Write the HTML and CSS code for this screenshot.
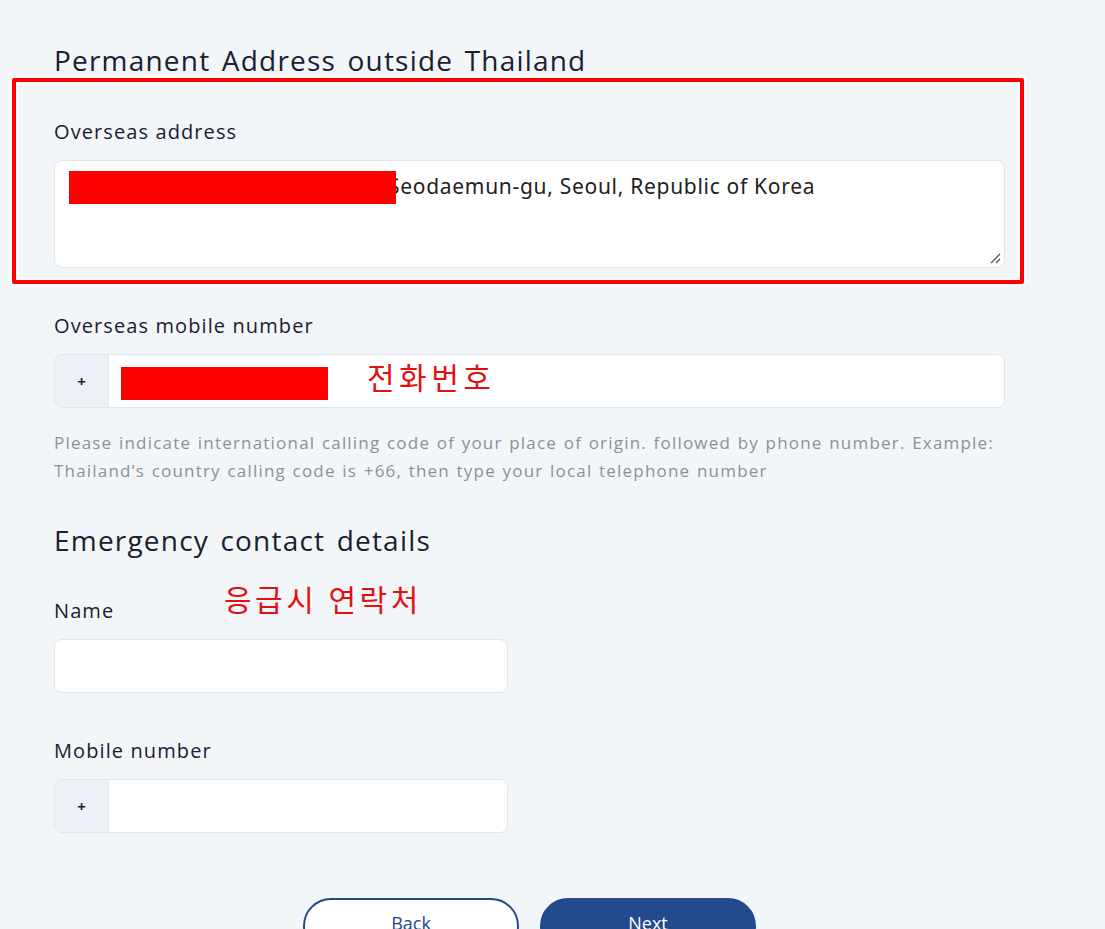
FILE: index.html
```html
<!DOCTYPE html>
<html lang="en">
<head>
    <meta charset="UTF-8" />
    <title>Permanent Address outside Thailand</title>
    <link rel="stylesheet" href="styles.css">
</head>
<body>
    <main class="form-page">
        <section class="section section-address">
            <h2 class="section-title">Permanent Address outside Thailand</h2>
            <div class="field">
                <label class="field-label">Overseas address</label>
                <div class="textarea">
                    <span class="redact redact-address"></span>
                    <span class="textarea-value">Seodaemun-gu, Seoul, Republic of Korea</span>
                    <svg class="resize-grip" width="12" height="12" viewBox="0 0 12 12">
                        <path d="M2 11 L11 2 M7 11 L11 7" stroke="#555" stroke-width="1.3" fill="none"/>
                    </svg>
                </div>
            </div>
            <div class="annotation-box"></div>
        </section>

        <div class="field">
            <label class="field-label">Overseas mobile number</label>
            <div class="input-group">
                <span class="input-prefix">+</span>
                <div class="input input-wide">
                    <span class="redact redact-phone"></span>
                    <span class="note note-phone">전화번호</span>
                </div>
            </div>
            <p class="hint">Please indicate international calling code of your place of origin. followed by phone number. Example: Thailand’s country calling code is +66, then type your local telephone number</p>
        </div>

        <section class="section section-emergency">
            <h2 class="section-title">Emergency contact details</h2>
            <span class="note note-emergency">응급시 연락처</span>
            <div class="field">
                <label class="field-label">Name</label>
                <div class="input input-half"></div>
            </div>
            <div class="field field-mobile">
                <label class="field-label">Mobile number</label>
                <div class="input-group input-half">
                    <span class="input-prefix">+</span>
                    <div class="input"></div>
                </div>
            </div>
        </section>

        <div class="actions">
            <button class="btn btn-outline" type="button">Back</button>
            <button class="btn btn-primary" type="button">Next</button>
        </div>
    </main>
</body>
</html>
```

FILE: styles.css
```css
* {
    box-sizing: border-box;
}
html, body {
    margin: 0;
    height: 100%;
    overflow: hidden;
}
body {
    background: #f2f6f9;
    font-family: "Open Sans", "Noto Sans", sans-serif;
    color: #1a2030;
}

.form-page {
    width: 1005px;
    padding: 42px 0 0 54px;
}

/* Sections */
.section {
    position: relative;
}
.section-title {
    margin: 0;
    font-size: 28px;
    line-height: 36px;
    font-weight: 400;
    letter-spacing: 1.2px;
    word-spacing: 3px;
}
.section-address .field {
    margin-top: 40px;
}
.section-emergency {
    margin-top: 37px;
}
.section-emergency .field {
    margin-top: 39px;
}
.section-emergency .field-mobile {
    margin-top: 44px;
}

/* Fields */
.field {
    margin-top: 44px;
}
.field-label {
    display: block;
    font-size: 20px;
    line-height: 28px;
    margin-bottom: 14px;
    letter-spacing: 1.1px;
}
.textarea {
    position: relative;
    height: 108px;
    background: #fff;
    border: 1px solid #e1e6eb;
    border-radius: 8px;
    padding: 11px 0 0 333px;
}
.textarea-value {
    font-family: "Noto Sans", sans-serif;
    font-size: 21px;
    line-height: 28px;
    letter-spacing: 0.7px;
    color: #222;
}
.resize-grip {
    position: absolute;
    right: 3px;
    bottom: 3px;
}

.input-group {
    display: flex;
    height: 54px;
    border: 1px solid #e1e6eb;
    border-radius: 8px;
    overflow: hidden;
    background: #fff;
}
.input-prefix {
    width: 54px;
    display: flex;
    align-items: center;
    justify-content: center;
    background: #edf1f7;
    border-right: 1px solid #e5e9ee;
    font-size: 15px;
    font-weight: 700;
}
.input {
    position: relative;
    flex: 1;
    height: 54px;
    background: #fff;
}
.input-group .input {
    height: auto;
}
.input.input-half {
    border: 1px solid #e1e6eb;
    border-radius: 8px;
}
.input-half {
    width: 454px;
}

.hint {
    margin: 21px 0 0;
    font-size: 17px;
    line-height: 28px;
    color: #8c9197;
    letter-spacing: 1.2px;
    word-spacing: 1px;
}

/* Annotations */
.redact {
    position: absolute;
    background: #ff0000;
}
.redact-address {
    left: 14px;
    top: 10px;
    width: 327px;
    height: 33px;
}
.redact-phone {
    left: 12px;
    top: 12px;
    width: 207px;
    height: 33px;
}
.note {
    position: absolute;
    font-family: "Noto Sans CJK KR", sans-serif;
    color: #e31010;
    font-size: 30px;
    line-height: 36px;
    letter-spacing: 4.5px;
    white-space: nowrap;
}
.note-phone {
    left: 258px;
    top: 3px;
}
.note-emergency {
    left: 170px;
    top: 58px;
    letter-spacing: 3.5px;
    word-spacing: 1px;
}
.annotation-box {
    position: absolute;
    left: -42px;
    top: 36px;
    width: 1012px;
    height: 206px;
    border: 4px solid #ff0000;
    border-radius: 2px;
    box-shadow: 0 0 0 2px #fff, inset 0 0 0 2px #fff;
    pointer-events: none;
}

/* Buttons */
.actions {
    display: flex;
    gap: 21px;
    margin: 65px 0 0 249px;
}
.btn {
    width: 216px;
    height: 56px;
    border-radius: 28px;
    font-family: inherit;
    font-size: 18px;
    padding-bottom: 8px;
    cursor: pointer;
}
.btn-outline {
    background: #fff;
    color: #22488a;
    border: 2px solid #22488a;
}
.btn-primary {
    background: #224a8c;
    color: #fff;
    border: 2px solid #224a8c;
}
```
